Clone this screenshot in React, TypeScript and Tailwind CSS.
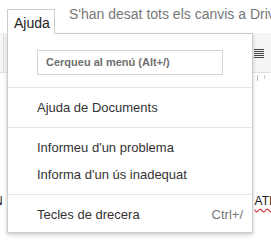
import type { ReactNode } from "react";

const font = "font-['Arial','Liberation_Sans',sans-serif]";

function Separator() {
  return <div className="my-[6px] h-px bg-[#e5e5e5]" />;
}

function MenuItem({ label, shortcut }: { label: string; shortcut?: ReactNode }) {
  return (
    <div className="flex h-[27px] items-center justify-between pl-[29px] pr-[9px] text-[13px] text-[#333]">
      <span>{label}</span>
      {shortcut && <span className="text-[#777]">{shortcut}</span>}
    </div>
  );
}

function HelpMenu() {
  return (
    <div className="absolute left-[7px] top-[33px] z-10 h-[200px] w-[246px] border border-[#ccc] bg-white shadow-[0_2px_4px_rgba(0,0,0,0.2)]">
      <div className="pt-[16px]">
        <div className="ml-[29px] flex h-[25px] w-[186px] items-center border border-[#d4d4d4] pl-[8px] text-[11px] font-bold text-[#6f6f6f]">
          Cerqueu al menú (Alt+/)
        </div>
      </div>
      <div className="mt-[12px]">
        <div className="h-px bg-[#e5e5e5]" />
        <div className="my-[6px]">
          <MenuItem label="Ajuda de Documents" />
        </div>
        <div className="h-px bg-[#e5e5e5]" />
        <div className="my-[6px]">
          <MenuItem label="Informeu d'un problema" />
          <MenuItem label="Informa d'un ús inadequat" />
        </div>
        <Separator />
        <MenuItem label="Tecles de drecera" shortcut="Ctrl+/" />
      </div>
    </div>
  );
}

export default function App() {
  return (
    <div className={`relative h-[245px] w-[271px] overflow-hidden bg-white ${font}`}>
      {/* menu bar */}
      <div className="flex h-[33px] items-end pl-[7px]">
        <div className="relative z-20 -mb-px flex h-[25px] w-[48px] shrink-0 items-start border-x border-t border-[#ccc] bg-white pl-[6px] pt-[3px] text-[14px] text-[#222]">
          Ajuda
        </div>
        <div className="mb-[8px] ml-[14px] whitespace-nowrap text-[14px] text-[#777]">
          S'han desat tots els canvis a Drive
        </div>
      </div>

      {/* toolbar behind the menu */}
      <div className="flex h-[40px] items-center justify-between border-b border-[#e0e0e0] bg-[#f5f5f5]">
        <div className="ml-[3px] h-full w-px bg-[#ddd]" />
        <div className="mr-[7px] flex w-[10px] flex-col gap-[1px] pt-[1px]">
          <div className="h-px bg-[#444]" />
          <div className="h-px bg-[#444]" />
          <div className="h-px bg-[#444]" />
          <div className="h-px bg-[#444]" />
          <div className="h-px bg-[#444]" />
        </div>
      </div>

      {/* ruler */}
      <div className="flex h-[12px] items-start justify-end gap-[6px] pr-[6px] pt-[2px]">
        <div className="h-[6px] w-px bg-[#bbb]" />
        <div className="h-[4px] w-px bg-[#ccc]" />
      </div>

      {/* document body */}
      <div className="mt-[109px] flex items-center justify-between text-[12px] leading-[14px] text-[#222]">
        <span className="-ml-[6px]">N</span>
        <span className="mr-[-10px] underline decoration-[#d33] decoration-wavy underline-offset-[3px]">ATIU</span>
      </div>

      <HelpMenu />
    </div>
  );
}
